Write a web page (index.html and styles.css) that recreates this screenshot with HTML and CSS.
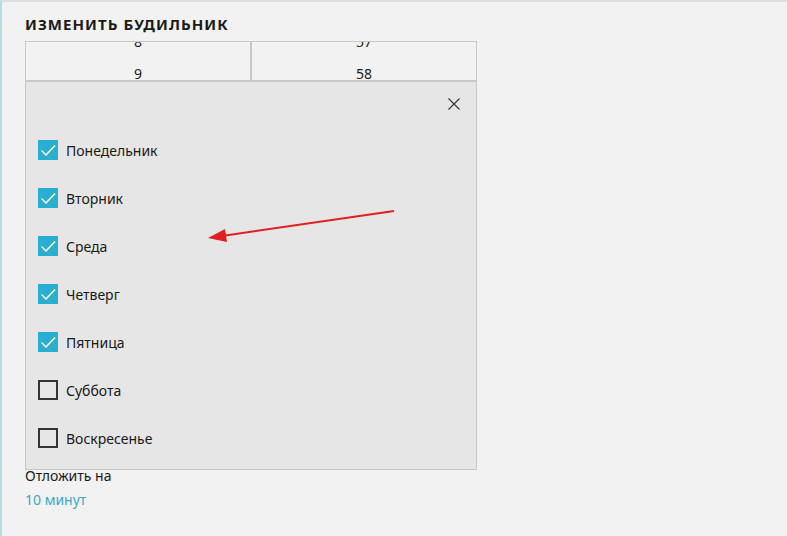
FILE: index.html
```html
<!DOCTYPE html>
<html lang="ru">
<head>
<meta charset="utf-8">
<link rel="stylesheet" href="styles.css">
</head>
<body>
<div class="page">
  <h1 class="title">ИЗМЕНИТЬ БУДИЛЬНИК</h1>
  <div class="picker">
    <div class="col">
      <div class="num">8</div>
      <div class="num">9</div>
    </div>
    <div class="col">
      <div class="num">57</div>
      <div class="num">58</div>
    </div>
  </div>
  <div class="spacer"></div>
  <div class="label">Отложить на</div>
  <div class="link">10 минут</div>

  <div class="flyout">
    <div class="close-row">
      <svg class="close" width="12" height="12" viewBox="0 0 12 12"><path d="M0.5 0.5 L11.5 11.5 M11.5 0.5 L0.5 11.5" stroke="#333" stroke-width="1.1" fill="none"/></svg>
    </div>
    <ul class="days">
      <li class="day"><span class="box checked"><svg viewBox="0 0 20 20" width="20" height="20"><path d="M3.5 10.5 L8 15 L17 5.5" stroke="#fff" stroke-width="1.4" fill="none"/></svg></span><span class="day-text">Понедельник</span></li>
      <li class="day"><span class="box checked"><svg viewBox="0 0 20 20" width="20" height="20"><path d="M3.5 10.5 L8 15 L17 5.5" stroke="#fff" stroke-width="1.4" fill="none"/></svg></span><span class="day-text">Вторник</span></li>
      <li class="day"><span class="box checked"><svg viewBox="0 0 20 20" width="20" height="20"><path d="M3.5 10.5 L8 15 L17 5.5" stroke="#fff" stroke-width="1.4" fill="none"/></svg></span><span class="day-text">Среда</span></li>
      <li class="day"><span class="box checked"><svg viewBox="0 0 20 20" width="20" height="20"><path d="M3.5 10.5 L8 15 L17 5.5" stroke="#fff" stroke-width="1.4" fill="none"/></svg></span><span class="day-text">Четверг</span></li>
      <li class="day"><span class="box checked"><svg viewBox="0 0 20 20" width="20" height="20"><path d="M3.5 10.5 L8 15 L17 5.5" stroke="#fff" stroke-width="1.4" fill="none"/></svg></span><span class="day-text">Пятница</span></li>
      <li class="day"><span class="box"></span><span class="day-text">Суббота</span></li>
      <li class="day"><span class="box"></span><span class="day-text">Воскресенье</span></li>
    </ul>
  </div>

  <svg class="arrow" width="787" height="536" viewBox="0 0 787 536">
    <line x1="394" y1="211" x2="222" y2="236" stroke="#e02020" stroke-width="2"/>
    <polygon points="208,238 225,229 227,242" fill="#e02020"/>
  </svg>
</div>
</body>
</html>
```

FILE: styles.css
```css
html, body {
  margin: 0;
  padding: 0;
  background: #f2f2f2;
}
body {
  font-family: "Noto Sans", "Open Sans", sans-serif;
  color: #1a1a1a;
}
.page {
  position: relative;
  width: 787px;
  height: 536px;
  box-sizing: border-box;
  padding: 0 0 0 25px;
  border-left: 2px solid #b9dde2;
  border-top: 2px solid #dedede;
  overflow: hidden;
}
.title {
  margin: 0 0 0 -2px;
  padding-top: 12px;
  height: 39px;
  box-sizing: border-box;
  font-size: 15px;
  font-weight: 700;
  letter-spacing: 1.05px;
  line-height: 20px;
}
.picker {
  margin-left: -2px;
  width: 452px;
  height: 40px;
  box-sizing: border-box;
  border: 1px solid #c8c8c8;
  display: flex;
  overflow: hidden;
}
.col {
  flex: 1;
  display: flex;
  flex-direction: column;
  align-items: center;
  margin-top: -16px;
}
.col + .col {
  border-left: 2px solid #c8c8c8;
}
.num {
  height: 32px;
  line-height: 32px;
  font-size: 14px;
}
.spacer {
  height: 385px;
}
.label {
  margin-left: -2px;
  font-size: 14px;
  line-height: 20px;
}
.link {
  margin-left: -2px;
  margin-top: 4px;
  font-size: 14px;
  line-height: 20px;
  color: #3ba8c8;
}
.flyout {
  position: absolute;
  left: 23px;
  top: 79px;
  width: 452px;
  height: 389px;
  box-sizing: border-box;
  background: #e6e6e6;
  border: 1px solid #c8c8c8;
}
.close-row {
  display: flex;
  justify-content: flex-end;
  padding: 16px 16px 0 0;
  height: 12px;
}
.days {
  list-style: none;
  margin: 0;
  padding: 30px 0 0 12px;
  display: flex;
  flex-direction: column;
  gap: 28px;
}
.day {
  display: flex;
  align-items: center;
  height: 20px;
  font-size: 14px;
  line-height: 20px;
  gap: 8px;
}
.day-text {
  padding-top: 1px;
}
.box {
  width: 20px;
  height: 20px;
  box-sizing: border-box;
  border: 2px solid #333;
  display: flex;
}
.box.checked {
  border: none;
  background: #2aaed0;
}
.arrow {
  position: absolute;
  left: -2px;
  top: -2px;
  pointer-events: none;
}
```
